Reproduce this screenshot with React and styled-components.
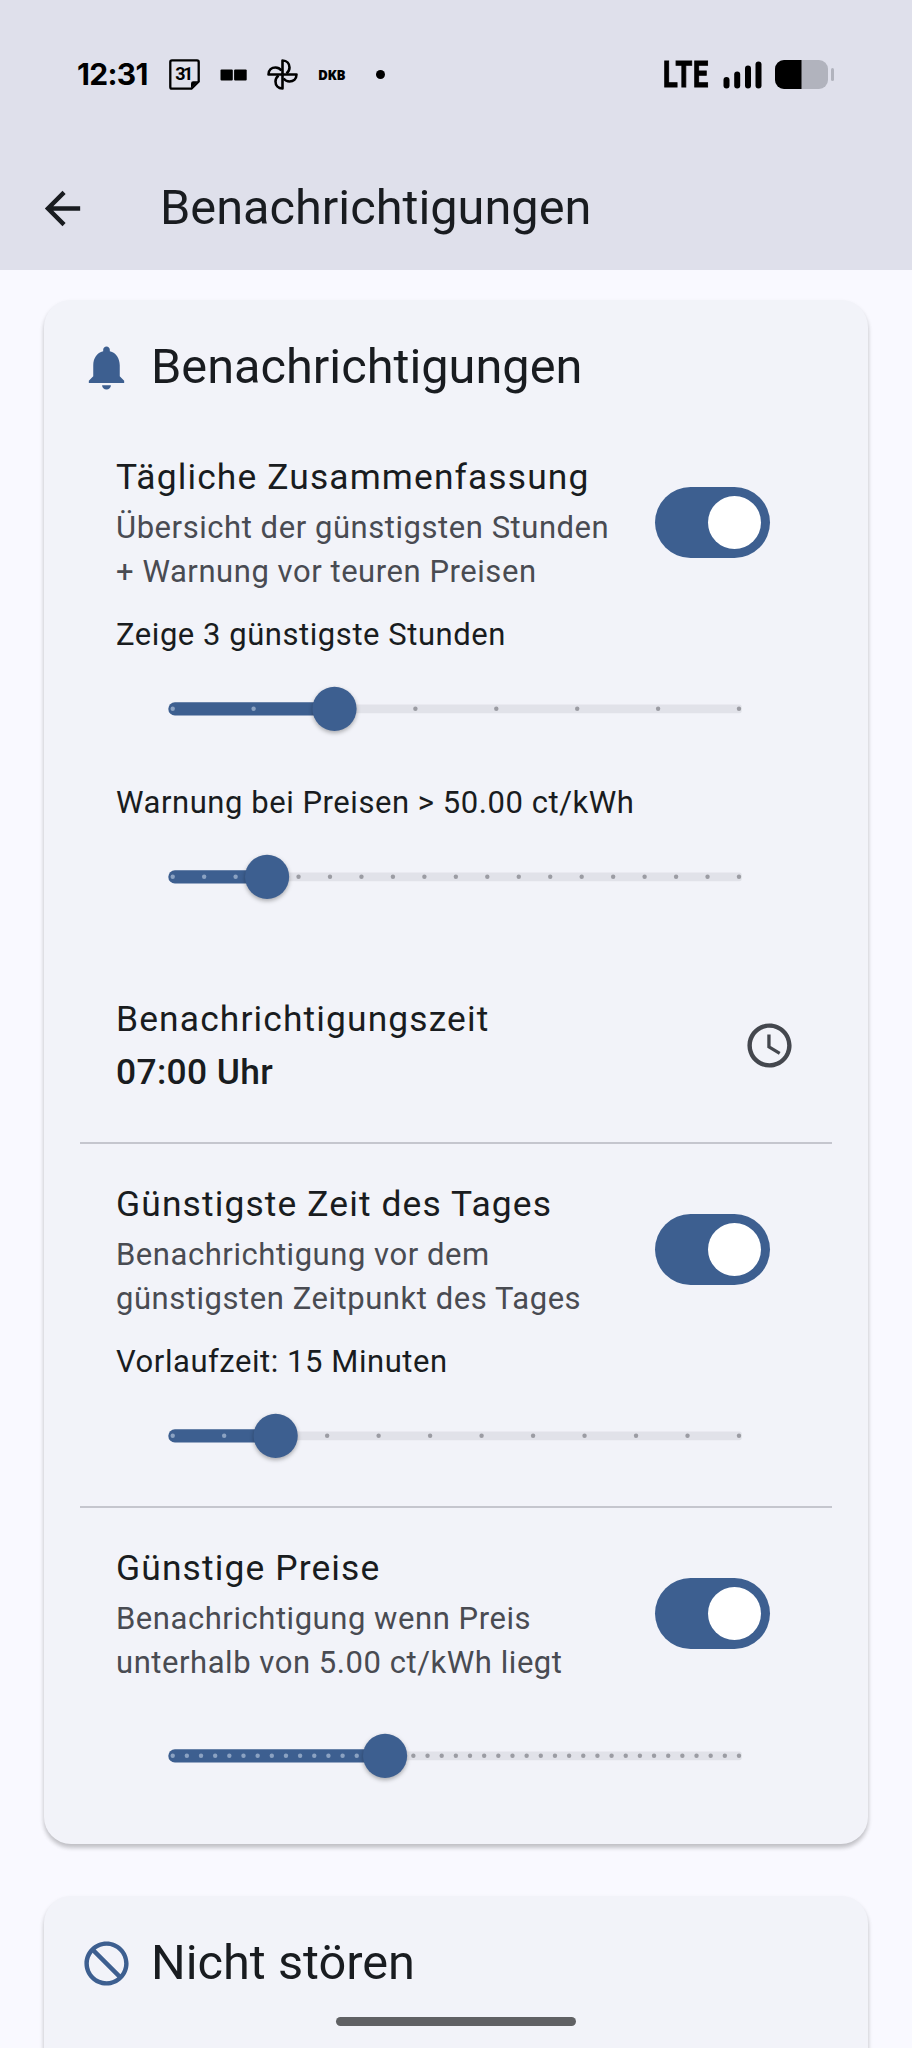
import React from "react";
import styled, { createGlobalStyle } from "styled-components";

const color = {
  bar: "#dfe0eb",
  page: "#f9f9ff",
  card: "#f2f3f9",
  primary: "#3d5f90",
  text: "#191c20",
  muted: "#494b52",
  track: "#e1e2e9",
  divider: "#c5c6ce",
};

const GlobalStyle = createGlobalStyle`
  * { box-sizing: border-box; }
  body {
    margin: 0;
    background: ${color.page};
    color: ${color.text};
    font-family: Roboto, "Liberation Sans", sans-serif;
  }
`;

const Screen = styled.div`
  position: relative;
  width: 912px;
  height: 2048px;
  overflow: hidden;
  background: ${color.page};
`;

const Header = styled.header`
  height: 270px;
  background: ${color.bar};
`;

const StatusBar = styled.div`
  display: flex;
  align-items: center;
  justify-content: space-between;
  height: 147px;
  padding: 2px 77px 0 77px;
  color: #000;
`;

const StatusGroup = styled.div`
  display: flex;
  align-items: center;
  svg { display: block; flex: none; }
`;

const Clock = styled.span`
  width: 92px;
  font: 700 30px/36px Inter, Roboto, sans-serif;
  letter-spacing: -0.7px;
  margin-top: -2px;
`;

const AppLabel = styled.span`
  width: 58px;
  margin-left: 20px;
  font: 800 13.5px/20px "Open Sans", Roboto, sans-serif;
  letter-spacing: -0.3px;
`;

const Dot = styled.span`
  width: 9px;
  height: 9px;
  border-radius: 50%;
  background: #000;
`;

const Network = styled.span`
  width: 60px;
  font: 700 36.5px/40px Roboto, sans-serif;
  letter-spacing: 1.2px;
  -webkit-text-stroke: 1.2px #000;
  transform: scaleX(0.74);
  transform-origin: left center;
`;

const AppBar = styled.div`
  display: flex;
  align-items: center;
  height: 123px;
  padding-left: 36px;
  svg { display: block; flex: none; }
`;

const AppTitle = styled.h1`
  margin: 0 0 2px 71px;
  font-weight: 400;
  font-size: 48.7px;
  line-height: 62px;
`;

const Content = styled.main`
  display: flex;
  flex-direction: column;
  gap: 52px;
  padding: 30px 44px 0;
`;

const Card = styled.section`
  height: ${(p) => p.$height}px;
  padding: 36px 36px 0;
  border-radius: 27px;
  background: ${color.card};
  box-shadow: 0 4px 4px rgba(0, 0, 0, 0.13), 0 3px 5px rgba(0, 0, 0, 0.13);
`;

const CardHeader = styled.div`
  display: flex;
  align-items: center;
  gap: 18px;
  height: 62px;
  svg { display: block; flex: none; }
`;

const CardTitle = styled.h2`
  margin: 0 0 1px;
  font-weight: 400;
  font-size: 48.7px;
  line-height: 62px;
`;

const Group = styled.div`
  padding: ${(p) => p.$top}px 35px ${(p) => p.$bottom || 0}px 36px;
`;

const SwitchRow = styled.div`
  display: flex;
  align-items: center;
  justify-content: space-between;
  height: 144px;
  padding-right: 27px;
`;

const RowTexts = styled.div`
  padding-top: 1px;
`;

const RowTitle = styled.div`
  font-size: 35.4px;
  line-height: 53px;
  letter-spacing: 1.13px;
  white-space: nowrap;
`;

const RowText = styled.div`
  padding-top: 2px;
  font-size: 31px;
  line-height: 44px;
  letter-spacing: 0.55px;
  color: ${color.muted};
  white-space: nowrap;
`;

const SwitchTrack = styled.div`
  display: flex;
  align-items: center;
  justify-content: flex-end;
  width: 115px;
  height: 71px;
  padding-right: 9px;
  border-radius: 36px;
  background: ${color.primary};
`;

const SwitchThumb = styled.div`
  width: 53px;
  height: 53px;
  border-radius: 50%;
  background: #fff;
`;

const SliderLabel = styled.div`
  height: 44px;
  margin-top: ${(p) => p.$gap}px;
  font-size: 31px;
  line-height: 45.6px;
  letter-spacing: 0.55px;
`;

const SliderBox = styled.div`
  height: 106px;
  margin-top: ${(p) => p.$gap || 0}px;
  padding-left: 52px;
  svg { display: block; overflow: visible; }
  .thumb { filter: drop-shadow(0 2px 2px rgba(0, 0, 0, 0.3)); }
`;

const TimeRow = styled.div`
  display: flex;
  align-items: center;
  justify-content: space-between;
  height: 106px;
  svg { display: block; margin: 0 1px 1px 0; }
`;

const TimeValue = styled(RowTitle)`
  padding-top: 0.7px;
  font-weight: 500;
  letter-spacing: 0.35px;
`;

const Divider = styled.hr`
  height: 2px;
  margin: 0;
  border: 0;
  background: ${color.divider};
`;

const HomeBar = styled.div`
  position: absolute;
  left: 336px;
  bottom: 22px;
  width: 240px;
  height: 9px;
  border-radius: 5px;
  background: #606164;
`;

function Switch() {
  return (
    <SwitchTrack role="switch" aria-checked="true">
      <SwitchThumb />
    </SwitchTrack>
  );
}

function Slider({ steps, value, gap }) {
  const first = 4.7;
  const gapX = 566.3 / steps;
  const thumbX = first + gapX * value;
  return (
    <SliderBox $gap={gap}>
      <svg width="574" height="106" viewBox="0 0 574 106">
        <rect x={thumbX} y="48.4" width={573.7 - thumbX} height="8.8" rx="2.5" fill={color.track} />
        <rect x="0.3" y="46.2" width={thumbX} height="13.3" rx="6.6" fill={color.primary} />
        {Array.from({ length: steps + 1 }, (_, i) => (
          <circle
            key={i}
            cx={first + gapX * i}
            cy="52.8"
            r="2.2"
            fill={i < value ? "#8ba2c2" : "#9b9ca3"}
          />
        ))}
        <circle className="thumb" cx={thumbX} cy="52.8" r="22.1" fill={color.primary} />
      </svg>
    </SliderBox>
  );
}

function SwitchSetting({ title, lines }) {
  return (
    <SwitchRow>
      <RowTexts>
        <RowTitle>{title}</RowTitle>
        <RowText>
          {lines[0]}
          <br />
          {lines[1]}
        </RowText>
      </RowTexts>
      <Switch />
    </SwitchRow>
  );
}

function MaterialIcon({ d, fill }) {
  return (
    <svg width="53" height="53" viewBox="0 0 24 24" fill={fill}>
      <path d={d} />
    </svg>
  );
}

const paths = {
  back: "M20 11H7.83l5.59-5.59L12 4l-8 8 8 8 1.41-1.41L7.83 13H20v-2z",
  bell: "M12 22c1.1 0 2-.9 2-2h-4c0 1.1.9 2 2 2zm6-6v-5c0-3.07-1.63-5.64-4.5-6.32V4c0-.83-.67-1.5-1.5-1.5s-1.5.67-1.5 1.5v.68C7.64 5.36 6 7.92 6 11v5l-2 2v1h16v-1l-2-2z",
  clock:
    "M11.99 2C6.47 2 2 6.48 2 12s4.47 10 9.99 10C17.52 22 22 17.52 22 12S17.52 2 11.99 2zM12 20c-4.42 0-8-3.58-8-8s3.58-8 8-8 8 3.58 8 8-3.58 8-8 8zm.5-13H11v6l5.25 3.15.75-1.23-4.5-2.67z",
  block:
    "M12 2C6.48 2 2 6.48 2 12s4.48 10 10 10 10-4.48 10-10S17.52 2 12 2zM4 12c0-1.85.63-3.55 1.69-4.9L16.9 18.31C15.55 19.37 13.85 20 12 20c-4.42 0-8-3.58-8-8zm14.31 4.9L7.1 5.69C8.45 4.63 10.15 4 12 4c4.42 0 8 3.58 8 8 0 1.85-.63 3.55-1.69 4.9z",
};

function CalendarIcon() {
  return (
    <svg width="31" height="31" viewBox="0 0 31 31">
      <path
        d="M3 1.3H28Q29.7 1.3 29.7 3V22.5L22.5 29.7H3Q1.3 29.7 1.3 28V3Q1.3 1.3 3 1.3Z"
        fill="none"
        stroke="#000"
        strokeWidth="2.3"
      />
      <path d="M22 29V24.5Q22 22.3 24.2 22.3H29Z" fill="#000" />
      <text
        x="15.3"
        y="21"
        textAnchor="middle"
        fontFamily="Roboto, sans-serif"
        fontWeight="700"
        fontSize="18"
        textLength="18"
      >
        31
      </text>
    </svg>
  );
}

const Squares = styled.svg`
  margin-left: 20px;
`;

function SquaresIcon() {
  return (
    <Squares width="27" height="12" viewBox="0 0 27 12">
      <rect x="0.5" width="12.3" height="11" y="0.5" rx="1" />
      <rect x="14.1" width="12.6" height="11" y="0.5" rx="1" />
    </Squares>
  );
}

const Pinwheel = styled.svg`
  margin-left: 20px;
`;

function PinwheelIcon() {
  return (
    <Pinwheel width="31" height="31" viewBox="0 0 31 31">
      {[0, 90, 180, 270].map((a) => (
        <path
          key={a}
          d="M15.5 15.5V1.5C20 1.5 22.5 4.8 22.5 8.5C22.5 11 21.3 13 19.5 14.5"
          transform={`rotate(${a} 15.5 15.5)`}
          fill="none"
          stroke="#000"
          strokeWidth="2.6"
          strokeLinejoin="round"
        />
      ))}
    </Pinwheel>
  );
}

function SignalIcon() {
  return (
    <svg width="40" height="28" viewBox="0 0 40 28">
      <rect x="0.5" y="16" width="6" height="11.5" rx="3" />
      <rect x="11.2" y="10.5" width="6" height="17" rx="3" />
      <rect x="22" y="4.5" width="6" height="23" rx="3" />
      <rect x="32.5" y="0.5" width="6" height="27" rx="3" />
    </svg>
  );
}

const Battery = styled.svg`
  margin-left: 12px;
`;

function BatteryIcon() {
  return (
    <Battery width="60" height="29" viewBox="0 0 60 29">
      <rect width="53" height="29" rx="9" fill="#b1b3bd" />
      <path d="M26.5 0H9A9 9 0 0 0 0 9V20A9 9 0 0 0 9 29H26.5Z" />
      <rect x="56" y="8" width="3" height="13" rx="1.5" fill="#b1b3bd" />
    </Battery>
  );
}

export default function App() {
  return (
    <Screen>
      <GlobalStyle />
      <Header>
        <StatusBar>
          <StatusGroup>
            <Clock>12:31</Clock>
            <CalendarIcon />
            <SquaresIcon />
            <PinwheelIcon />
            <AppLabel>DKB</AppLabel>
            <Dot />
          </StatusGroup>
          <StatusGroup>
            <Network>LTE</Network>
            <SignalIcon />
            <BatteryIcon />
          </StatusGroup>
        </StatusBar>
        <AppBar>
          <MaterialIcon d={paths.back} fill={color.text} />
          <AppTitle>Benachrichtigungen</AppTitle>
        </AppBar>
      </Header>
      <Content>
        <Card $height={1544}>
          <CardHeader>
            <MaterialIcon d={paths.bell} fill={color.primary} />
            <CardTitle>Benachrichtigungen</CardTitle>
          </CardHeader>
          <Group $top={52}>
            <SwitchSetting
              title="Tägliche Zusammenfassung"
              lines={["Übersicht der günstigsten Stunden", "+ Warnung vor teuren Preisen"]}
            />
            <SliderLabel $gap={18}>Zeige 3 günstigste Stunden</SliderLabel>
            <Slider steps={7} value={2} />
            <SliderLabel $gap={18}>Warnung bei Preisen &gt; 50.00 ct/kWh</SliderLabel>
            <Slider steps={18} value={3} />
          </Group>
          <Group $top={63} $bottom={43}>
            <TimeRow>
              <div>
                <RowTitle>Benachrichtigungszeit</RowTitle>
                <TimeValue>07:00 Uhr</TimeValue>
              </div>
              <MaterialIcon d={paths.clock} fill="#44474e" />
            </TimeRow>
          </Group>
          <Divider />
          <Group $top={33.3} $bottom={17}>
            <SwitchSetting
              title="Günstigste Zeit des Tages"
              lines={["Benachrichtigung vor dem", "günstigsten Zeitpunkt des Tages"]}
            />
            <SliderLabel $gap={17.8}>Vorlaufzeit: 15 Minuten</SliderLabel>
            <Slider steps={11} value={2} />
          </Group>
          <Divider />
          <Group $top={33.2}>
            <SwitchSetting
              title="Günstige Preise"
              lines={["Benachrichtigung wenn Preis", "unterhalb von 5.00 ct/kWh liegt"]}
            />
            <Slider steps={40} value={15} gap={17.4} />
          </Group>
        </Card>
        <Card $height={400}>
          <CardHeader>
            <MaterialIcon d={paths.block} fill={color.primary} />
            <CardTitle>Nicht stören</CardTitle>
          </CardHeader>
        </Card>
      </Content>
      <HomeBar />
    </Screen>
  );
}
